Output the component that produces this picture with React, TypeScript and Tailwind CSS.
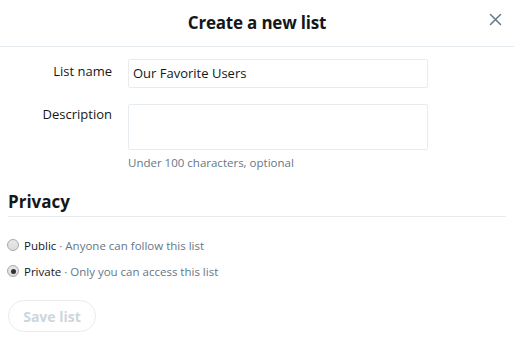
import React from "react";

export default function App() {
  return (
    <div className="w-[514px] h-[346px] bg-white overflow-hidden" style={{ fontFamily: '"Open Sans", "Noto Sans", sans-serif' }}>
      <div className="relative h-[47px] border-b border-[#e6ecf0] flex items-center justify-center">
        <div className="text-[17px] font-bold text-[#14171a] tracking-[-0.2px]">Create a new list</div>
        <button className="absolute left-[488px] top-[12px] w-[14px] h-[14px] flex items-center justify-center">
          <svg width="13" height="13" viewBox="0 0 13 13">
            <path d="M1.5 1.5 L11.5 11.5 M11.5 1.5 L1.5 11.5" stroke="#657786" strokeWidth="1.5" strokeLinecap="round" />
          </svg>
        </button>
      </div>
      <div className="pt-[12px]">
        <div className="flex items-start">
          <label className="w-[112px] text-right text-[13px] text-[#14171a] pt-[3px]">List name</label>
          <div className="ml-[16px] w-[300px] h-[29px] border border-[#e6ecf0] rounded-[2px] flex items-center px-[4px] text-[13px] text-[#14171a]">Our Favorite Users</div>
        </div>
        <div className="flex items-start mt-[16px]">
          <label className="w-[112px] text-right text-[13px] text-[#14171a] pt-[1px]">Description</label>
          <div className="ml-[16px]">
            <div className="w-[300px] h-[46px] border border-[#e6ecf0] rounded-[2px]" />
            <div className="text-[11.5px] text-[#657786] mt-[4px]">Under 100 characters, optional</div>
          </div>
        </div>
        <div className="mx-[8px] mt-[19px] border-b border-[#e6ecf0] pb-[3px]">
          <div className="text-[17px] font-bold text-[#14171a] leading-[23px]">Privacy</div>
        </div>
        <div className="mt-[19px] pl-[7px] flex flex-col gap-[8px]">
          <div className="flex items-center h-[18px]">
            <span className="w-[12px] h-[12px] rounded-full border border-[#a9a9a9] bg-gradient-to-b from-[#e8e8e8] to-[#dcdcdc]" />
            <span className="ml-[5px] text-[11.5px] text-[#14171a]">Public</span>
            <span className="ml-[3px] text-[11.5px] text-[#657786]">· Anyone can follow this list</span>
          </div>
          <div className="flex items-center h-[18px]">
            <span className="w-[12px] h-[12px] rounded-full border border-[#a9a9a9] bg-gradient-to-b from-[#e8e8e8] to-[#dcdcdc] flex items-center justify-center">
              <span className="w-[5px] h-[5px] rounded-full bg-[#333]" />
            </span>
            <span className="ml-[5px] text-[11.5px] text-[#14171a]">Private</span>
            <span className="ml-[3px] text-[11.5px] text-[#657786]">· Only you can access this list</span>
          </div>
        </div>
        <div className="mt-[20px] ml-[8px]">
          <button className="w-[88px] h-[32px] rounded-full border border-[#e6ecf0] text-[14px] font-bold text-[#ccd6dd]">Save list</button>
        </div>
      </div>
    </div>
  );
}
